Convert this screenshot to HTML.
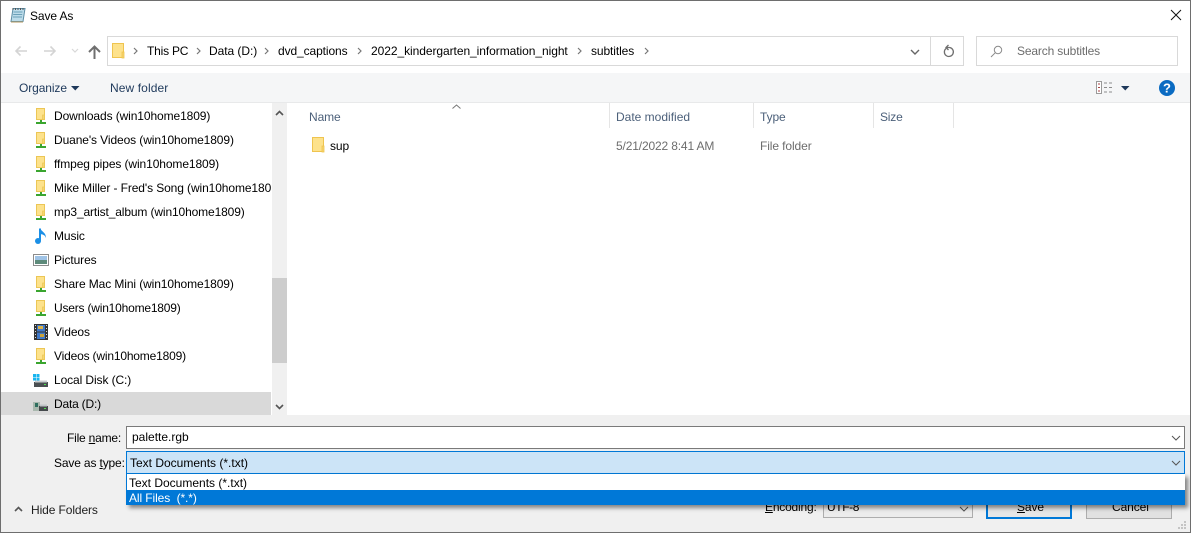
<!DOCTYPE html>
<html><head><meta charset="utf-8"><style>
html,body{margin:0;padding:0;width:1191px;height:533px;overflow:hidden;background:#fff}
#w{position:relative;width:1191px;height:533px;overflow:hidden;font-family:"Liberation Sans",sans-serif;font-size:12px;color:#000;background:#fff}
.a{position:absolute}
.t{position:absolute;white-space:nowrap;line-height:16px;letter-spacing:-.1px}
svg{position:absolute;overflow:visible}
u{text-decoration:underline}
</style></head><body><div id="w">
<svg width="0" height="0"><defs>
<g id="nf"><rect x="1.500" y="1.500" width="8" height="11" fill="#fde28c" stroke="#ecc655"/><rect x="7.500" y="8" width="2" height="4.500" fill="#f6d66f" stroke="#ecc655" stroke-width=".7"/><rect x="5" y="13" width="2" height="2" fill="#3aa52f"/><rect x="1" y="15" width="10" height="2" fill="#3aa52f"/></g>
<g id="f"><rect x=".5" y=".5" width="11" height="14" fill="#fde28c" stroke="#efc44f"/><rect x="10" y="9" width="2" height="6" fill="#f6d66f" stroke="#efc44f" stroke-width=".8"/></g>
</defs></svg>

<!-- title -->
<svg style="left:10px;top:7px" width="16" height="16"><path d="M3 1.500h12l-2 13H1z" fill="#bcdcea" stroke="#5d8ea6"/><path d="M3.500 5h9M3.200 7.500h9M3 10h9" stroke="#6aa0b8"/><path d="M3 1v2M5.500 1v2M8 1v2M10.500 1v2M13 1v2" stroke="#555"/><path d="M1 15h12" stroke="#b79a62"/></svg>
<div class="t" style="left:30px;top:8px">Save As</div>
<svg style="left:1170px;top:9px" width="13" height="13"><path d="M1 1l10 10M11 1L1 11" stroke="#111" stroke-width="1" fill="none"/></svg>

<!-- nav -->
<svg style="left:14px;top:45px" width="14" height="12"><path d="M13 6H2M6.500 1.500L2 6l4.500 4.500" stroke="#d4d4d4" stroke-width="1.600" fill="none"/></svg>
<svg style="left:43px;top:45px" width="14" height="12"><path d="M1 6h11M7.500 1.500L12 6l-4.500 4.500" stroke="#d4d4d4" stroke-width="1.600" fill="none"/></svg>
<svg style="left:71px;top:48px" width="8" height="6"><path d="M1 1l3 3 3-3" stroke="#d8d8d8" stroke-width="1.200" fill="none"/></svg>
<svg style="left:88px;top:45px" width="13" height="14"><path d="M6.500 14V2M1 7l5.500-5.500L12 7" stroke="#6f6f6f" stroke-width="2" fill="none"/></svg>

<div class="a" style="left:107px;top:36px;width:855px;height:28px;border:1px solid #d9d9d9"></div>
<div class="a" style="left:930px;top:37px;width:1px;height:28px;background:#d9d9d9"></div>
<svg style="left:112px;top:43px" width="13" height="16"><use href="#f"/></svg>
<svg style="left:133px;top:47px" width="5" height="8"><path d="M1 1l3 3-3 3" stroke="#777" stroke-width="1.200" fill="none"/></svg>
<div class="t" style="left:147px;top:43px;letter-spacing:-.2px">This PC</div>
<svg style="left:196px;top:47px" width="5" height="8"><path d="M1 1l3 3-3 3" stroke="#777" stroke-width="1.200" fill="none"/></svg>
<div class="t" style="left:209px;top:43px;letter-spacing:-.05px">Data (D:)</div>
<svg style="left:264px;top:47px" width="5" height="8"><path d="M1 1l3 3-3 3" stroke="#777" stroke-width="1.200" fill="none"/></svg>
<div class="t" style="left:278px;top:43px">dvd_captions</div>
<svg style="left:357px;top:47px" width="5" height="8"><path d="M1 1l3 3-3 3" stroke="#777" stroke-width="1.200" fill="none"/></svg>
<div class="t" style="left:371px;top:43px;letter-spacing:-.06px">2022_kindergarten_information_night</div>
<svg style="left:577px;top:47px" width="5" height="8"><path d="M1 1l3 3-3 3" stroke="#777" stroke-width="1.200" fill="none"/></svg>
<div class="t" style="left:591px;top:43px">subtitles</div>
<svg style="left:644px;top:47px" width="5" height="8"><path d="M1 1l3 3-3 3" stroke="#777" stroke-width="1.200" fill="none"/></svg>
<svg style="left:910px;top:49px" width="10" height="6"><path d="M1 1l4 4 4-4" stroke="#666" stroke-width="1.400" fill="none"/></svg>
<svg style="left:942px;top:44px" width="14" height="14"><path d="M4 4.500A4.500 4.500 0 1 0 7.500 3.500H4.500M6.500 1L4 3.500 6.500 6" stroke="#6f6f6f" stroke-width="1.300" fill="none"/></svg>

<div class="a" style="left:976px;top:36px;width:200px;height:28px;border:1px solid #d9d9d9"></div>
<svg style="left:990px;top:45px" width="13" height="13"><circle cx="8" cy="5" r="3.700" fill="none" stroke="#8a8a8a"/><path d="M5.200 7.800L1 12" stroke="#8a8a8a" fill="none"/></svg>
<div class="t" style="left:1017px;top:43px;color:#6d6d6d;letter-spacing:-.15px">Search subtitles</div>

<!-- toolbar -->
<div class="a" style="left:1px;top:73px;width:1189px;height:30px;background:#f5f6f7;border-bottom:1px solid #e8e9ea;box-sizing:border-box"></div>
<div class="t" style="left:19px;top:80px;color:#1e395b">Organize</div>
<svg style="left:71px;top:86px" width="9" height="5"><path d="M0 0h8.500L4.250 4.500z" fill="#1e395b"/></svg>
<div class="t" style="left:110px;top:80px;color:#1e395b;letter-spacing:.1px">New folder</div>
<svg style="left:1096px;top:81px" width="18" height="13"><rect x=".5" y=".5" width="5" height="12" fill="#fff" stroke="#9a9a9a"/><path d="M2 3h2M2 6.500h2M2 10h2" stroke="#a44"/><path d="M8 2h3M13 2h3M8 6.500h3M13 6.500h3M8 11h3M13 11h3" stroke="#8c8c8c"/></svg>
<svg style="left:1121px;top:86px" width="9" height="5"><path d="M0 0h8.500L4.250 4.500z" fill="#1e395b"/></svg>
<svg style="left:1159px;top:80px" width="16" height="16"><circle cx="8" cy="8" r="8" fill="#0a6bc2"/><text x="8" y="12.500" font-family="Liberation Sans" font-size="13" font-weight="bold" fill="#fff" text-anchor="middle">?</text></svg>

<!-- nav tree -->
<div class="a" style="left:272px;top:103px;width:15px;height:312px;background:#f0f0f0"></div>
<div class="a" style="left:272px;top:278px;width:15px;height:85px;background:#cdcdcd"></div>
<svg style="left:275px;top:110px" width="9" height="6"><path d="M1 5l3.500-3.500L8 5" stroke="#555" stroke-width="1.600" fill="none"/></svg>
<svg style="left:275px;top:404px" width="9" height="6"><path d="M1 1l3.500 3.500L8 1" stroke="#555" stroke-width="1.600" fill="none"/></svg>
<div class="a" style="left:1px;top:392px;width:270px;height:23px;background:#d9d9d9"></div>

<svg style="left:35px;top:107px" width="12" height="18"><use href="#nf"/></svg>
<div class="t" style="left:54px;top:108px">Downloads (win10home1809)</div>
<svg style="left:35px;top:131px" width="12" height="18"><use href="#nf"/></svg>
<div class="t" style="left:54px;top:132px">Duane's Videos (win10home1809)</div>
<svg style="left:35px;top:155px" width="12" height="18"><use href="#nf"/></svg>
<div class="t" style="left:54px;top:156px">ffmpeg pipes (win10home1809)</div>
<svg style="left:35px;top:179px" width="12" height="18"><use href="#nf"/></svg>
<div class="t" style="left:54px;top:180px;width:217px;overflow:hidden">Mike Miller - Fred's Song (win10home1809)</div>
<svg style="left:35px;top:203px" width="12" height="18"><use href="#nf"/></svg>
<div class="t" style="left:54px;top:204px;letter-spacing:-.13px">mp3_artist_album (win10home1809)</div>
<svg style="left:35px;top:228px" width="12" height="16"><path d="M5 0.500v12" stroke="#1b8fe6" stroke-width="2" fill="none"/><path d="M5.500 0.500c.5 3 6 4 5.300 9.500C10 7 8 6.500 5.500 6z" fill="#1b8fe6"/><ellipse cx="3" cy="13" rx="3" ry="3" fill="#1b8fe6"/></svg>
<div class="t" style="left:54px;top:228px">Music</div>
<svg style="left:33px;top:254px" width="16" height="12"><rect x=".5" y=".5" width="15" height="11" fill="#fff" stroke="#8c8c8c"/><rect x="2" y="2" width="12" height="4" fill="#9fc3e6"/><rect x="2" y="6" width="12" height="4" fill="#5d8a7a"/></svg>
<div class="t" style="left:54px;top:252px">Pictures</div>
<svg style="left:35px;top:275px" width="12" height="18"><use href="#nf"/></svg>
<div class="t" style="left:54px;top:276px">Share Mac Mini (win10home1809)</div>
<svg style="left:35px;top:299px" width="12" height="18"><use href="#nf"/></svg>
<div class="t" style="left:54px;top:300px;letter-spacing:-.2px">Users (win10home1809)</div>
<svg style="left:34px;top:324px" width="14" height="16"><rect width="14" height="16" fill="#333"/><rect x="3" y="1" width="8" height="6.500" fill="#3f78c8"/><rect x="3" y="8.500" width="8" height="6.500" fill="#3f78c8"/><rect x="4" y="2" width="5" height="3" fill="#d9b24a"/><rect x="6" y="10" width="4" height="3" fill="#c9a23a"/><path d="M1.500 1v14M12.500 1v14" stroke="#ddd" stroke-dasharray="1 2"/></svg>
<div class="t" style="left:54px;top:324px">Videos</div>
<svg style="left:35px;top:347px" width="12" height="18"><use href="#nf"/></svg>
<div class="t" style="left:54px;top:348px;letter-spacing:-.18px">Videos (win10home1809)</div>
<svg style="left:33px;top:374px" width="16" height="13"><rect x="0" y="0" width="3" height="3" fill="#19b5ef"/><rect x="3.500" y="0" width="3" height="3" fill="#19b5ef"/><rect x="0" y="3.500" width="3" height="3" fill="#19b5ef"/><rect x="3.500" y="3.500" width="3" height="3" fill="#19b5ef"/><rect x="1" y="8" width="14" height="5" fill="#4a4f52"/><rect x="2" y="6.500" width="12" height="2" fill="#c8cccf"/><rect x="11" y="10" width="2" height="1" fill="#4fe04f"/></svg>
<div class="t" style="left:54px;top:372px">Local Disk (C:)</div>
<svg style="left:33px;top:401px" width="15" height="12"><rect x="0" y="1" width="7" height="9" fill="#a9b8ae"/><rect x="2" y="2" width="3" height="4" fill="#2f6f5f"/><rect x="6" y="5" width="9" height="5" fill="#45494c"/><rect x="7" y="3.500" width="7" height="2" fill="#bfc3c6"/><rect x="11" y="7" width="2" height="1" fill="#4fe04f"/></svg>
<div class="t" style="left:54px;top:396px;letter-spacing:-.2px">Data (D:)</div>

<!-- headers -->
<div class="a" style="left:609px;top:103px;width:1px;height:25px;background:#e5e5e5"></div>
<div class="a" style="left:753px;top:103px;width:1px;height:25px;background:#e5e5e5"></div>
<div class="a" style="left:873px;top:103px;width:1px;height:25px;background:#e5e5e5"></div>
<div class="a" style="left:953px;top:103px;width:1px;height:25px;background:#e5e5e5"></div>
<svg style="left:452px;top:104px" width="9" height="5"><path d="M.5 4.500L4.500 1l4 3.500" stroke="#777" fill="none"/></svg>
<div class="t" style="left:309px;top:109px;color:#4c607a">Name</div>
<div class="t" style="left:616px;top:109px;color:#4c607a;letter-spacing:0">Date modified</div>
<div class="t" style="left:760px;top:109px;color:#4c607a">Type</div>
<div class="t" style="left:880px;top:109px;color:#4c607a;letter-spacing:-.2px">Size</div>
<svg style="left:312px;top:137px" width="13" height="16"><use href="#f"/></svg>
<div class="t" style="left:330px;top:138px">sup</div>
<div class="t" style="left:616px;top:138px;color:#6d6d6d;letter-spacing:-.15px">5/21/2022 8:41 AM</div>
<div class="t" style="left:760px;top:138px;color:#6d6d6d">File folder</div>

<!-- bottom -->
<div class="a" style="left:0;top:415px;width:1191px;height:118px;background:#f0f0f0"></div>
<div class="t" style="left:67px;top:430px;letter-spacing:-.2px">File <u>n</u>ame:</div>
<div class="a" style="left:126px;top:426px;width:1057px;height:21px;background:#fff;border:1px solid #7a7a7a"></div>
<div class="t" style="left:132px;top:429px;letter-spacing:0">palette.rgb</div>
<svg style="left:1171px;top:435px" width="10" height="6"><path d="M1 1l4 4 4-4" stroke="#555" fill="none"/></svg>
<div class="t" style="left:54px;top:455px;letter-spacing:-.15px">Save as <u>t</u>ype:</div>
<div class="a" style="left:126px;top:451px;width:1057px;height:21px;background:#cce4f7;border:1px solid #0078d7"></div>
<div class="t" style="left:130px;top:455px;letter-spacing:0">Text Documents (*.txt)</div>
<svg style="left:1171px;top:460px" width="10" height="6"><path d="M1 1l4 4 4-4" stroke="#555" fill="none"/></svg>

<svg style="left:14px;top:506px" width="9" height="6"><path d="M1 5l3.500-3.500L8 5" stroke="#555" stroke-width="1.600" fill="none"/></svg>
<div class="t" style="left:31px;top:502px;color:#1e1e1e">Hide Folders</div>

<div class="t" style="left:765px;top:499px;letter-spacing:-.2px"><u>E</u>ncoding:</div>
<div class="a" style="left:823px;top:499px;width:148px;height:17px;background:#ececec;border:1px solid #adadad"></div>
<div class="t" style="left:827px;top:499px;letter-spacing:-.4px">UTF-8</div>
<svg style="left:959px;top:506px" width="10" height="6"><path d="M1 1l4 4 4-4" stroke="#555" fill="none"/></svg>
<div class="a" style="left:986px;top:495px;width:82px;height:20px;background:#e6e6e6;border:2px solid #0078d7"></div>
<div class="t" style="left:1017px;top:499px"><u>S</u>ave</div>
<div class="a" style="left:1086px;top:495px;width:84px;height:22px;background:#e1e1e1;border:1px solid #adadad"></div>
<div class="t" style="left:1112px;top:499px">Cancel</div>
<svg style="left:1178px;top:521px" width="10" height="10"><g fill="#c4c4c4"><rect x="6" y="0" width="2" height="2"/><rect x="3" y="3" width="2" height="2"/><rect x="6" y="3" width="2" height="2"/><rect x="0" y="6" width="2" height="2"/><rect x="3" y="6" width="2" height="2"/><rect x="6" y="6" width="2" height="2"/></g></svg>

<!-- dropdown -->
<div class="a" style="left:126px;top:474px;width:1059px;height:31px;background:#fff;box-shadow:3px 3px 4px rgba(0,0,0,.45)"></div>
<div class="a" style="left:126px;top:474px;width:1px;height:16px;background:#0078d7"></div>
<div class="a" style="left:126px;top:490px;width:1059px;height:15px;background:#0078d7"></div>
<div class="t" style="left:129px;top:475px;letter-spacing:0">Text Documents (*.txt)</div>
<div class="t" style="left:129px;top:490px;color:#fff;white-space:pre">All Files  (*.*)</div>

<!-- window border -->
<div class="a" style="left:0;top:0;width:1189px;height:531px;border:1px solid #6e6e6e"></div>
</div></body></html>
